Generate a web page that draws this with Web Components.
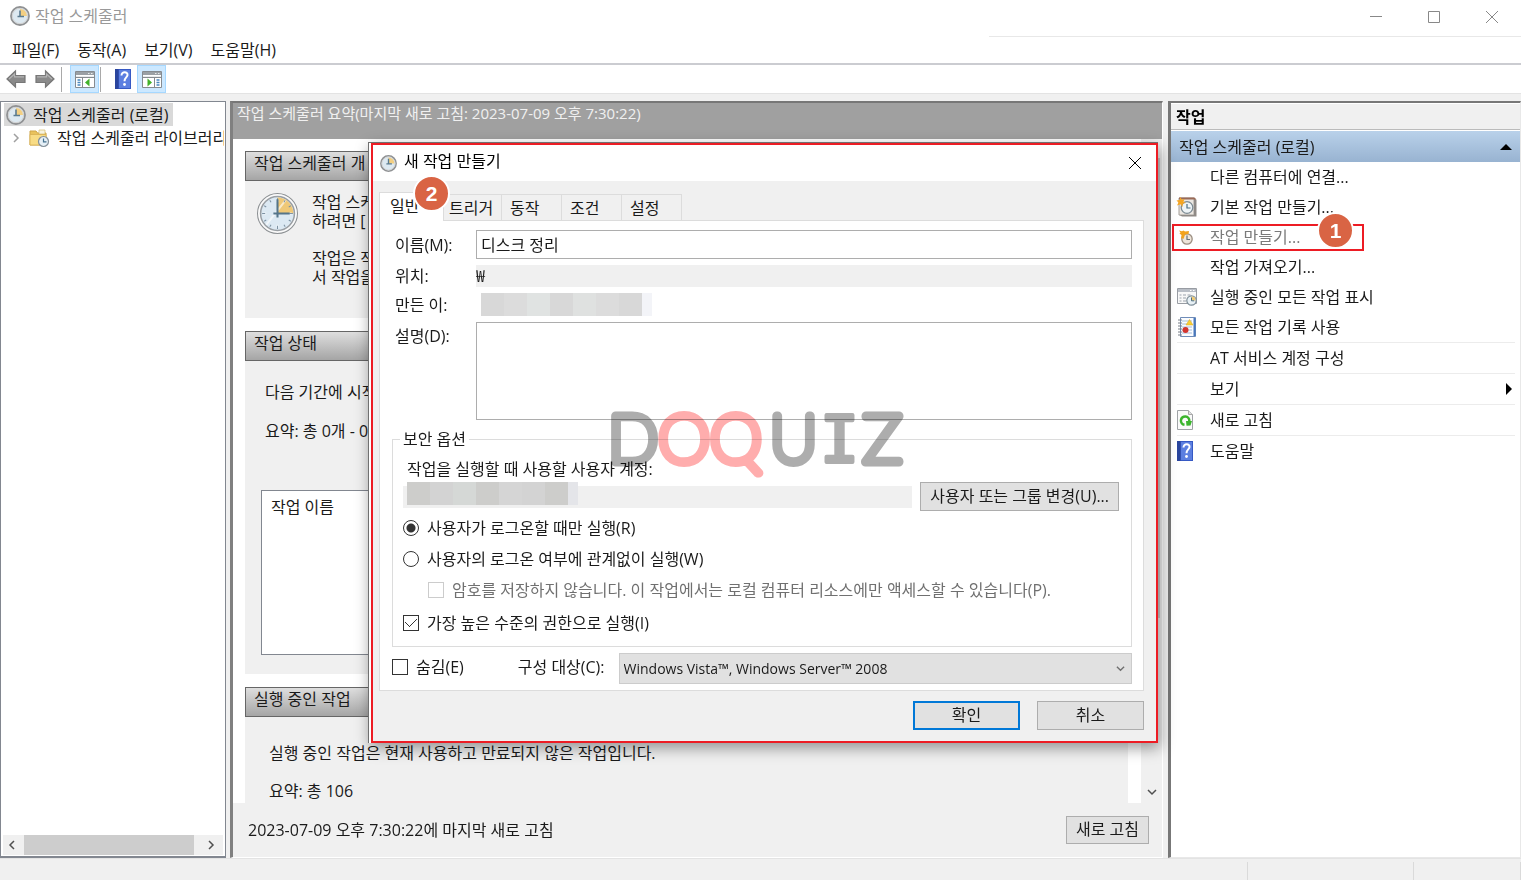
<!DOCTYPE html>
<html lang="ko">
<head>
<meta charset="utf-8">
<title>작업 스케줄러</title>
<style>
	html, body {
		margin: 0;
		height: 100%;
	}
	body {
		font: 16px/22px "Open Sans", "Noto Sans CJK KR", sans-serif;
		color: #1a1a1a;
		background: #f0f0f0;
	}
</style>
</head>
<body>
<scheduler-app></scheduler-app>
<script>
const icons = {
	clock: `<svg viewBox="0 0 40 40"><circle cx="20" cy="20" r="19.500" fill="#fafafa" stroke="#8b8f92"/><circle cx="20" cy="20" r="16.500" fill="#dce9f3" stroke="#9a9fa4" stroke-width="1.500"/><path d="M20 20V4.500A15.500 15.500 0 0 1 35.500 20z" fill="#efc877"/><path d="M9 31L28 7M20 6v3M20 31v3M6 20h3M31 20h3" stroke="#fff" stroke-width="2" opacity=".6"/><path d="M20 5v3M20 32v3M5 20h3M32 20h3M12.500 7l1.200 2M7 12.500l2 1.200M7 27.500l2-1.200M12.500 33l1.200-2M27.500 33l-1.200-2M33 27.500l-2-1.200M27.500 7l-1.200 2M33 12.500l-2 1.200" stroke="#7e93a4"/><path d="M20 6v18M16 20h16" stroke="#55758a" stroke-width="2" fill="none"/></svg>`,
	clockSmall: `<svg viewBox="0 0 20 20"><circle cx="10" cy="10" r="9" fill="#dde9f1" stroke="#8f9193" stroke-width="1.800"/><circle cx="10" cy="10" r="7.700" fill="none" stroke="#d2d2d2"/><path d="M10 10V3a7 7 0 0 1 7 7z" fill="#f3cf82"/><path d="M10 4.500v6.500M7.500 10.500H14" stroke="#5a7b90" stroke-width="1.600" fill="none"/></svg>`,
	back: `<svg viewBox="0 0 20 18"><path d="M1 9l8.500-8v4.500H19v7H9.500V17z" fill="#8a8a8a" stroke="#777" stroke-width="1.200"/><path d="M3 9l5.500-5v2.800H18" stroke="#b4b4b4" stroke-width="1.200" fill="none"/></svg>`,
	forward: `<svg viewBox="0 0 20 18"><path d="M19 9l-8.500-8v4.500H1v7h9.500V17z" fill="#8a8a8a" stroke="#777" stroke-width="1.200"/><path d="M17 9l-5.500-5v2.800H2" stroke="#b4b4b4" stroke-width="1.200" fill="none"/></svg>`,
	paneLeft: `<svg viewBox="0 0 20 18"><path d="M.5 1.500h19v16H.5z" fill="#fff" stroke="#868b90"/><path d="M1 2h18v3H1z" fill="#9aa0a5"/><path d="M13 3.500h1.500M16 3.500h1.500M1 6.500h18" stroke="#e8ebed"/><path d="M1 7.500h18M7.500 8v9" stroke="#868b90"/><path d="M2.500 10h3M2.500 12.500h3M2.500 15h3" stroke="#4787bf" stroke-width="1.300"/><path d="M14.500 8.500v8L10 12.500z" fill="#42b229"/></svg>`,
	paneRight: `<svg viewBox="0 0 20 18"><path d="M.5 1.500h19v16H.5z" fill="#fff" stroke="#868b90"/><path d="M1 2h18v3H1z" fill="#9aa0a5"/><path d="M13 3.500h1.500M16 3.500h1.500M1 6.500h18" stroke="#e8ebed"/><path d="M1 7.500h18M12.500 8v9" stroke="#868b90"/><path d="M14.500 10h3M14.500 12.500h3M14.500 15h3" stroke="#4787bf" stroke-width="1.300"/><path d="M5.500 8.500v8l4.500-4z" fill="#42b229"/></svg>`,
	help: `<svg viewBox="0 0 16 20"><path d="M0 0h16v20H0z" fill="#3659c4"/><path d="M4 1h11v18H4z" fill="#5c7fe0"/><path d="M0 0h3.500v20H0z" fill="#2a459d"/><path d="M6.500 6.500c0-4.500 6.500-4 6-.3-.3 2.300-3 2.400-3 6" fill="none" stroke="#fff" stroke-width="2"/><circle cx="9.500" cy="15.500" r="1.400" fill="#fff"/></svg>`,
	folder: `<svg viewBox="0 0 20 18"><path d="M1 2h6l1.500 2H17v12H1z" fill="#e9c25c" stroke="#cfa548"/><path d="M10 1h6v4h-6z" fill="#f7f3df" stroke="#d6bb6d" stroke-width=".7"/><path d="M1 5.500h16V16H1z" fill="#f8dc85" stroke="#d8b052" stroke-width=".8"/><circle cx="14.500" cy="12.500" r="5" fill="#e5eff6" stroke="#84909a" stroke-width="1.200"/><path d="M14.500 9.500v3.300h3" stroke="#45728f" stroke-width="1.200" fill="none"/></svg>`,
	basic: `<svg viewBox="0 0 20 20"><path d="M2 1h15v17H2z" fill="#ebe7e2" stroke="#a49e98"/><path d="M17 1l2.500 2v16.500H5L2.500 18H17z" fill="#8f8a86"/><path d="M2 .5h15.500l2 2H2z" fill="#9a6a57"/><circle cx="10" cy="10.500" r="5.800" fill="#eef4f7" stroke="#7c8b94" stroke-width="1.300"/><path d="M10 7v4h3.500" stroke="#4c7086" stroke-width="1.200" fill="none"/><path d="M3.500 0l1.200 2.800L7.500 2l-1 2.700L9 6 5.800 6.500 5.500 10l-2-2.800L0 8.500l1.500-3L-.5 3.500l3-.4z" fill="#f5a623"/></svg>`,
	create: `<svg viewBox="0 0 20 20"><circle cx="10" cy="12" r="5.200" fill="#eee5da" stroke="#9a8d80" stroke-width="1.300"/><path d="M10 8.500V12.500h3" stroke="#67727c" stroke-width="1.200" fill="none"/><path d="M2 3.500l3 .8 1.500-.8 1.500 1 4-.5-.5 3-3.500.5L6.500 12l-1.500-1-1 1 .5-4-2-1.500 1-1z" fill="#f2a21d"/></svg>`,
	running: `<svg viewBox="0 0 20 18"><path d="M.5.5h19v15H.5z" fill="#f8f8f8" stroke="#989ca3"/><path d="M1 1h18v3H1z" fill="#b9bec6"/><path d="M13 2.500h1.500M16 2.500h1.500" stroke="#fff"/><path d="M2.500 7h2M6 7h3M10.500 7h3M2.500 10h2M6 10h3M2.500 13h2M6 13h3" stroke="#9ca3ac"/><circle cx="14.500" cy="12.500" r="4.700" fill="#e7f0f5" stroke="#7e8e98" stroke-width="1.200"/><path d="M14.500 12.500V8.500a4 4 0 0 1 4 4z" fill="#f1ca75"/><path d="M14.500 9.500v3.300h2.700" stroke="#4b6e83" fill="none"/></svg>`,
	history: `<svg viewBox="0 0 20 20"><path d="M3.500.5h15v19h-15z" fill="#fafcff" stroke="#6f8cb8"/><path d="M16.500 1h2v18h-2z" fill="#4978bd"/><path d="M5 4h10M5 7h10M5 10h10M5 13h10M5 16h10" stroke="#a6bdd9"/><path d="M1 3h4M1 6h4M1 9h4M1 12h4M1 15h4M1 18h4" stroke="#777d85"/><path d="M12.500 2.500l3.500 5.500H9z" fill="#f8cf35" stroke="#d8a722" stroke-width=".5"/><circle cx="8.500" cy="13" r="3" fill="#d3342e"/></svg>`,
	refresh: `<svg viewBox="0 0 16 20"><path d="M.5.5h11l4 4v15H.5z" fill="#fafafa" stroke="#9fa3a6"/><path d="M11.500.5v4h4" fill="#e0e0e0" stroke="#aaa"/><path d="M7.500 14.800A4.200 4.200 0 1 1 12.300 11" fill="none" stroke="#3cb52e" stroke-width="2.500"/><path d="M9 11h6l-1.500 4.500-4 .2z" fill="#3cb52e"/></svg>`,
	close: `<svg viewBox="0 0 12 12"><path d="M0 0l12 12M12 0L0 12" stroke="currentColor"/></svg>`,
	minimize: `<svg viewBox="0 0 12 12"><path d="M0 5.500h12" stroke="currentColor"/></svg>`,
	maximize: `<svg viewBox="0 0 12 12"><path d="M.5.5h11v11H.5z" fill="none" stroke="currentColor"/></svg>`,
	chevron: `<svg viewBox="0 0 10 10"><path d="M1 3l4 4 4-4" fill="none" stroke="currentColor" stroke-width="1.500"/></svg>`,
	triangle: `<svg viewBox="0 0 12 12"><path d="M0 9l6-6 6 6z" fill="#000"/></svg>`
};

class UiIcon extends HTMLElement {
	constructor() {
		super();
		this.attachShadow({mode: 'open'});
	}
	connectedCallback() {
		const width = this.getAttribute('width') || 20;
		const height = this.getAttribute('height') || width;
		this.shadowRoot.innerHTML = `
		<style>
		:host {
			display: block;
			flex: none;
			width: ${width}px;
			height: ${height}px;
		}
		svg {
			display: block;
			width: 100%;
			height: 100%;
			overflow: visible;
		}
		</style>
		${icons[this.getAttribute('name')]}`;
	}
}
window.customElements.define('ui-icon', UiIcon);

class StepBadge extends HTMLElement {
	constructor() {
		super();
		this.attachShadow({mode: 'open'}).innerHTML = `
		<style>
		:host {
			display: flex;
			align-items: center;
			justify-content: center;
			width: 33px;
			height: 33px;
			border: 2px solid #fff;
			border-radius: 50%;
			background: #d96444;
			color: #fff;
			font: bold 21px/24px "Liberation Sans", sans-serif;
		}
		</style>
		<slot></slot>`;
	}
}
window.customElements.define('step-badge', StepBadge);

class TitleBar extends HTMLElement {
	constructor() {
		super();
		this.attachShadow({mode: 'open'}).innerHTML = `
		<style>
		:host {
			display: flex;
			justify-content: space-between;
			height: 37px;
			background: #fff;
			color: #999;
		}
		.title {
			display: flex;
			align-items: center;
			gap: 5px;
			height: 32px;
			padding-left: 10px;
		}
		.controls {
			display: flex;
			width: 35%;
			justify-content: flex-end;
			border-bottom: 1px solid #e8e8e8;
		}
		button {
			display: flex;
			align-items: center;
			justify-content: center;
			width: 58px;
			height: 34px;
			padding: 0;
			border: 0;
			background: none;
			color: #888;
		}
		</style>
		<div class="title"><ui-icon name="clockSmall"></ui-icon><span>작업 스케줄러</span></div>
		<div class="controls">
			<button aria-label="최소화"><ui-icon name="minimize" width="12"></ui-icon></button>
			<button aria-label="최대화"><ui-icon name="maximize" width="12"></ui-icon></button>
			<button aria-label="닫기"><ui-icon name="close" width="12"></ui-icon></button>
		</div>`;
	}
}
window.customElements.define('title-bar', TitleBar);

class MenuBar extends HTMLElement {
	constructor() {
		super();
		this.attachShadow({mode: 'open'}).innerHTML = `
		<style>
		:host {
			display: flex;
			gap: 18px;
			height: 26px;
			padding-left: 12px;
			background: #fff;
			border-bottom: 2px solid #cbccd1;
		}
		button {
			padding: 0;
			border: 0;
			background: none;
			color: inherit;
			font: inherit;
		}
		</style>
		<button>파일(F)</button>
		<button>동작(A)</button>
		<button>보기(V)</button>
		<button>도움말(H)</button>`;
	}
}
window.customElements.define('menu-bar', MenuBar);

class ToolBar extends HTMLElement {
	constructor() {
		super();
		this.attachShadow({mode: 'open'}).innerHTML = `
		<style>
		:host {
			display: flex;
			align-items: center;
			height: 28px;
			padding-left: 1px;
			background: #fff;
			border-bottom: 1px solid #e3e3e3;
		}
		button {
			display: flex;
			align-items: center;
			justify-content: center;
			width: 29px;
			height: 28px;
			box-sizing: border-box;
			padding: 0;
			border: 0;
			background: none;
		}
		button.on {
			background: #cce8ff;
			border: 1px solid #a6d8ff;
		}
		i {
			width: 1px;
			height: 25px;
			background: #a9a9a9;
		}
		i.first {
			margin: 0 8px 0 2px;
		}
		i.second {
			margin: 0 7px 0 1px;
		}
		</style>
		<button aria-label="뒤로"><ui-icon name="back" height="18"></ui-icon></button>
		<button aria-label="앞으로"><ui-icon name="forward" height="18"></ui-icon></button>
		<i class="first"></i>
		<button class="on" aria-label="콘솔 트리"><ui-icon name="paneLeft" height="18"></ui-icon></button>
		<i class="second"></i>
		<button aria-label="도움말"><ui-icon name="help" width="16" height="20"></ui-icon></button>
		<button class="on" aria-label="작업 창"><ui-icon name="paneRight" height="18"></ui-icon></button>`;
	}
}
window.customElements.define('tool-bar', ToolBar);

class TreePane extends HTMLElement {
	constructor() {
		super();
		this.attachShadow({mode: 'open'}).innerHTML = `
		<style>
		:host {
			display: flex;
			flex-direction: column;
			width: 226px;
			box-sizing: border-box;
			border: 1px solid #828790;
			border-bottom-width: 2px;
			background: #fff;
			white-space: nowrap;
		}
		.tree {
			flex: 1;
			overflow: hidden;
			padding: 1px 0 0 3px;
			margin-right: 1px;
		}
		.node {
			display: flex;
			align-items: center;
			gap: 7px;
			height: 23px;
		}
		.root {
			width: max-content;
			padding: 0 4px 0 2px;
			background: #d9d9d9;
		}
		.child {
			gap: 8px;
			padding-left: 7px;
		}
		.child .arrow {
			color: #a0a0a0;
			transform: rotate(-90deg);
		}
		.scroll {
			display: flex;
			align-items: center;
			justify-content: space-between;
			height: 20px;
			margin: 0 2px 1px;
			padding: 0 7px 0 4px;
			background: #f0f0f0;
			color: #505050;
		}
		.thumb {
			flex: 1;
			height: 20px;
			margin: 0 12px 0 7px;
			background: #cdcdcd;
		}
		.left {
			transform: rotate(90deg);
		}
		.right {
			transform: rotate(-90deg);
		}
		</style>
		<div class="tree">
			<div class="node root"><ui-icon name="clockSmall"></ui-icon><span>작업 스케줄러 (로컬)</span></div>
			<div class="node child"><ui-icon class="arrow" name="chevron" width="10"></ui-icon><ui-icon name="folder" height="18"></ui-icon><span>작업 스케줄러 라이브러리</span></div>
		</div>
		<div class="scroll">
			<ui-icon class="left" name="chevron" width="10"></ui-icon>
			<div class="thumb"></div>
			<ui-icon class="right" name="chevron" width="10"></ui-icon>
		</div>`;
	}
}
window.customElements.define('tree-pane', TreePane);

class SummaryGroup extends HTMLElement {
	constructor() {
		super();
		this.attachShadow({mode: 'open'}).innerHTML = `
		<style>
		:host {
			display: block;
			background: #f0f0f0;
		}
		header {
			height: 30px;
			box-sizing: border-box;
			padding: 0 8px;
			border: 1px solid #666;
			background: linear-gradient(#dedede, #a5a5a5);
		}
		</style>
		<header><slot name="heading"></slot></header>
		<slot></slot>`;
	}
}
window.customElements.define('summary-group', SummaryGroup);

class SummaryPane extends HTMLElement {
	constructor() {
		super();
		this.attachShadow({mode: 'open'}).innerHTML = `
		<style>
		:host {
			display: flex;
			flex-direction: column;
			min-width: 0;
			min-height: 0;
			margin-right: 1px;
			box-sizing: border-box;
			border: 1px solid #fff;
			border-width: 2px 1px 1px 3px;
			border-color: #777 #fff #fff #808080;
		}
		.caption {
			height: 36px;
			box-sizing: border-box;
			padding-left: 4px;
			background: #a0a0a0;
			color: #f0f0f0;
			font-size: 15px;
			line-height: 20px;
		}
		.view {
			display: flex;
			flex: 1;
			min-height: 0;
		}
		.groups {
			display: flex;
			flex-direction: column;
			flex: 1;
			gap: 13px;
			overflow: hidden;
			padding: 12px 13px 0 12px;
			background: #fff;
		}
		summary-group {
			flex: none;
		}
		summary-group:last-child {
			flex: 1 0 auto;
		}
		p {
			margin: 0;
		}
		.overview {
			display: flex;
			gap: 14px;
			padding: 12px 12px 31px;
			line-height: 19px;
		}
		.overview p + p {
			margin-top: 18px;
		}
		.status {
			padding: 20px 16px 19px 20px;
		}
		.status p + p {
			margin-top: 17px;
		}
		.list {
			height: 163px;
			margin: 48px 0 0 -4px;
			border: 1px solid #828790;
			background: #fff;
		}
		th {
			padding: 3px 7px;
			font-weight: normal;
		}
		.active {
			padding: 25px 24px 0;
		}
		.active p + p {
			margin-top: 16px;
		}
		.scroll {
			display: flex;
			flex-direction: column;
			justify-content: space-between;
			align-items: center;
			width: 21px;
			padding-bottom: 6px;
			color: #505050;
		}
		.thumb {
			width: 17px;
			height: 460px;
			margin-top: 19px;
			background: #cdcdcd;
		}
		footer {
			display: flex;
			align-items: center;
			justify-content: space-between;
			height: 54px;
			padding: 0 13px 0 15px;
		}
		footer button {
			height: 28px;
			padding: 0 9px 2px;
			border: 1px solid #adadad;
			background: #e1e1e1;
			color: inherit;
			font: inherit;
		}
		</style>
		<div class="caption">작업 스케줄러 요약(마지막 새로 고침: 2023-07-09 오후 7:30:22)</div>
		<div class="view">
			<div class="groups">
				<summary-group>
					<span slot="heading">작업 스케줄러 개</span>
					<div class="overview">
						<ui-icon name="clock" width="41"></ui-icon>
						<div>
							<p>작업 스케<br>하려면 [</p>
							<p>작업은 작<br>서 작업을</p>
						</div>
					</div>
				</summary-group>
				<summary-group>
					<span slot="heading">작업 상태</span>
					<div class="status">
						<p>다음 기간에 시작</p>
						<p>요약: 총 0개 - 0</p>
						<div class="list"><table><tr><th>작업 이름</th></tr></table></div>
					</div>
				</summary-group>
				<summary-group>
					<span slot="heading">실행 중인 작업</span>
					<div class="active">
						<p>실행 중인 작업은 현재 사용하고 만료되지 않은 작업입니다.</p>
						<p>요약: 총 106</p>
					</div>
				</summary-group>
			</div>
			<div class="scroll"><div class="thumb"></div><ui-icon name="chevron" width="10"></ui-icon></div>
		</div>
		<footer><span>2023-07-09 오후 7:30:22에 마지막 새로 고침</span><button>새로 고침</button></footer>`;
	}
}
window.customElements.define('summary-pane', SummaryPane);

class ActionItem extends HTMLElement {
	constructor() {
		super();
		this.attachShadow({mode: 'open'});
	}
	connectedCallback() {
		const icon = this.getAttribute('icon');
		const narrow = icon == 'help' || icon == 'refresh';
		this.shadowRoot.innerHTML = `
		<style>
		:host {
			display: block;
			position: relative;
			margin: 0 5px 0 6px;
		}
		:host([divided]) {
			border-top: 1px solid #ececec;
		}
		button {
			display: flex;
			align-items: center;
			width: 100%;
			height: 30px;
			padding: 0;
			border: 0;
			background: none;
			color: inherit;
			font: inherit;
			text-align: left;
		}
		:host([disabled]) button {
			color: #7a7a7a;
		}
		.icon {
			width: 33px;
		}
		.label {
			flex: 1;
		}
		.more {
			transform: rotate(90deg);
		}
		</style>
		<button ${this.hasAttribute('disabled') ? 'disabled' : ''}>
			<span class="icon">${icon ? `<ui-icon name="${icon}" width="${narrow ? 16 : 20}" height="20"></ui-icon>` : ''}</span>
			<span class="label"><slot></slot></span>
			${this.hasAttribute('submenu') ? '<ui-icon class="more" name="triangle" width="12"></ui-icon>' : ''}
		</button>
		<slot name="mark"></slot>`;
	}
}
window.customElements.define('action-item', ActionItem);

class ActionPane extends HTMLElement {
	constructor() {
		super();
		this.attachShadow({mode: 'open'}).innerHTML = `
		<style>
		:host {
			display: block;
			box-sizing: border-box;
			border: 1px solid #e8e8e8;
			border-width: 2px 1px 1px 3px;
			border-top-color: #777;
			border-left-color: #777;
			background: #fff;
		}
		h2 {
			margin: 0;
			padding: 2px 5px 1px;
			border-top: 1px solid #fff;
			border-bottom: 1px solid #bbb;
			background: #f0f0f0;
			font-size: 16px;
			line-height: 22px;
			color: #000;
		}
		.group {
			display: flex;
			align-items: center;
			justify-content: space-between;
			height: 31px;
			margin-top: 1px;
			padding: 0 8px;
			background: linear-gradient(#b9d1ea, #98b3d1);
		}
		.frame {
			position: absolute;
			inset: 2px auto auto -5px;
			width: 188px;
			height: 23px;
			border: 2px solid #ed1c24;
		}
		step-badge {
			position: absolute;
			right: 8px;
			top: -14px;
		}
		</style>
		<h2>작업</h2>
		<div class="group"><span>작업 스케줄러 (로컬)</span><ui-icon name="triangle" width="12"></ui-icon></div>
		<action-item>다른 컴퓨터에 연결...</action-item>
		<action-item icon="basic">기본 작업 만들기...</action-item>
		<action-item icon="create" disabled>작업 만들기...<div class="frame" slot="mark"><step-badge>1</step-badge></div></action-item>
		<action-item>작업 가져오기...</action-item>
		<action-item icon="running">실행 중인 모든 작업 표시</action-item>
		<action-item icon="history">모든 작업 기록 사용</action-item>
		<action-item divided>AT 서비스 계정 구성</action-item>
		<action-item divided submenu>보기</action-item>
		<action-item divided icon="refresh">새로 고침</action-item>
		<action-item divided icon="help">도움말</action-item>`;
	}
}
window.customElements.define('action-pane', ActionPane);

// account name covered with grey blocks
class MaskedName extends HTMLElement {
	constructor() {
		super();
		this.attachShadow({mode: 'open'}).innerHTML = `
		<style>
		:host {
			display: flex;
			width: 171px;
			height: 23px;
		}
		i {
			flex: 23;
			background: var(--mask, #dcdcdc);
		}
		i:nth-of-type(1), i:nth-of-type(4), i:nth-of-type(7) {
			background: var(--mask-dark, #d8d8d8);
		}
		i:nth-of-type(3) {
			background: var(--mask-green, #e0e3e2);
		}
		i:nth-of-type(5) {
			background: var(--mask-light, #dfe1e0);
		}
		i:nth-of-type(8) {
			flex: 10;
			background: var(--mask-end, #f3f4f8);
		}
		</style>
		<i></i><i></i><i></i><i></i><i></i><i></i><i></i><i></i>`;
	}
}
window.customElements.define('masked-name', MaskedName);

class TaskDialog extends HTMLElement {
	constructor() {
		super();
		this.attachShadow({mode: 'open'}).innerHTML = `
		<style>
		:host {
			display: block;
			border: 1px solid #707070;
			border-width: 1px 0 0 1px;
			padding-left: 2px;
			background: #fff;
			box-shadow: 2px 5px 14px rgba(0, 0, 0, .4);
		}
		.frame {
			border: 2px solid #ed1c24;
			background: #f0f0f0;
		}
		.title {
			display: flex;
			align-items: center;
			gap: 7px;
			height: 36px;
			padding: 0 15px 0 7px;
			background: #fff;
			color: #000;
		}
		.title span {
			flex: 1;
			padding-bottom: 4px;
		}
		button {
			height: 29px;
			padding: 0 9px 2px;
			border: 1px solid #adadad;
			background: #e1e1e1;
			color: inherit;
			font: inherit;
			white-space: nowrap;
		}
		.title button {
			height: auto;
			padding: 0;
			border: 0;
			background: none;
		}
		.body {
			padding: 11px 12px 11px 6px;
		}
		.tabs {
			display: flex;
			align-items: flex-end;
			position: relative;
		}
		.tabs button {
			width: 60px;
			height: 26px;
			padding: 0 8px;
			border: 1px solid #dcdcdc;
			border-width: 1px 1px 0 0;
			background: #f0f0f0;
			text-align: left;
		}
		.tabs .current {
			width: 65px;
			height: 29px;
			margin-bottom: -1px;
			padding: 0 10px 3px;
			border-left-width: 1px;
			background: #fff;
			z-index: 1;
		}
		.tabs .current + button {
			width: 58px;
			padding: 0 5px;
		}
		step-badge {
			position: absolute;
			left: 34px;
			top: -17px;
			z-index: 2;
		}
		.panel {
			padding: 9px 11px 6px 12px;
			border: 1px solid #dcdcdc;
			background: #fff;
		}
		.fields {
			display: grid;
			grid-template-columns: 81px 1fr;
			gap: 6px 0;
			align-items: center;
			margin-left: 3px;
		}
		input[type=text], textarea, select {
			box-sizing: border-box;
			width: 100%;
			margin: 0;
			padding: 0 4px 2px;
			border: 1px solid #adadad;
			border-radius: 0;
			background: #fff;
			color: inherit;
			font: inherit;
		}
		#name {
			height: 29px;
		}
		input[readonly] {
			height: 22px;
			padding: 0;
			border: 0;
			background: #f0f0f0;
		}
		textarea {
			display: block;
			height: 98px;
			resize: none;
		}
		.top {
			align-self: start;
			margin-top: 3px;
		}
		.fields masked-name {
			margin-left: 5px;
		}
		fieldset {
			min-width: 0;
			margin: 8px 0 0;
			padding: 0 12px 12px 10px;
			border: 1px solid #dcdcdc;
		}
		legend {
			margin-left: -3px;
			padding: 0 3px;
		}
		.account-label {
			display: block;
			margin: 8px 0 2px 4px;
		}
		.account {
			display: flex;
			align-items: center;
			gap: 8px;
			margin-bottom: 6px;
		}
		.account-name {
			position: relative;
			flex: 1;
		}
		.account-name input {
			display: block;
		}
		.account-name masked-name {
			--mask: #d3d3d3;
			--mask-dark: #cdcdcb;
			--mask-green: #d5d8d6;
			--mask-light: #d5d5d5;
			--mask-end: #e4e5e9;
			position: absolute;
			left: 4px;
			top: -4px;
		}
		.choice {
			display: flex;
			align-items: center;
			gap: 8px;
		}
		.choice + .choice {
			margin-top: 9px;
		}
		.choice.sub {
			margin-left: 25px;
			color: #707070;
		}
		.choice input {
			appearance: none;
			flex: none;
			width: 16px;
			height: 16px;
			box-sizing: border-box;
			margin: 0;
			border: 1px solid #333;
			background: #fff;
		}
		.choice input[type=radio] {
			border-radius: 50%;
		}
		.choice input[type=radio]:checked {
			background: radial-gradient(#333 0 4px, #fff 5px);
		}
		.choice input[type=checkbox]:checked {
			background:
				linear-gradient(45deg, transparent 46%, #333 46% 54%, transparent 54%) 1px 6px / 5px 5px no-repeat,
				linear-gradient(-45deg, transparent 46%, #333 46% 54%, transparent 54%) 5px 3px / 8px 8px no-repeat;
		}
		.choice input:disabled {
			border-color: #ccc;
		}
		.choice + .last {
			margin-top: 11px;
		}
		.target {
			display: flex;
			align-items: center;
			margin-top: 6px;
		}
		.target label {
			padding-bottom: 4px;
		}
		.target .for {
			margin: 0 14px 0 54px;
		}
		.drop {
			position: relative;
			flex: 1;
		}
		select {
			display: block;
			appearance: none;
			height: 31px;
			padding-bottom: 0;
			border-color: #ccc;
			background: #e1e1e1;
			font-size: 14px;
		}
		.drop ui-icon {
			position: absolute;
			right: 7px;
			top: 11px;
			color: #707070;
		}
		.actions {
			display: flex;
			justify-content: flex-end;
			gap: 17px;
			margin-top: 10px;
		}
		.actions button {
			width: 107px;
		}
		.actions .ok {
			border: 2px solid #0078d7;
		}
		</style>
		<div class="frame">
			<div class="title"><ui-icon name="clockSmall" width="17"></ui-icon><span>새 작업 만들기</span><button aria-label="닫기"><ui-icon name="close" width="12"></ui-icon></button></div>
			<div class="body">
				<div class="tabs">
					<button class="current">일반</button><button>트리거</button><button>동작</button><button>조건</button><button>설정</button>
					<step-badge>2</step-badge>
				</div>
				<div class="panel">
					<div class="fields">
						<label for="name">이름(M):</label><input type="text" id="name" value="디스크 정리">
						<label for="place">위치:</label><input type="text" id="place" value="₩" readonly>
						<span>만든 이:</span><masked-name></masked-name>
						<label class="top" for="about">설명(D):</label><textarea id="about"></textarea>
					</div>
					<fieldset>
						<legend>보안 옵션</legend>
						<label class="account-label" for="account">작업을 실행할 때 사용할 사용자 계정:</label>
						<div class="account">
							<div class="account-name"><input type="text" id="account" readonly><masked-name></masked-name></div>
							<button>사용자 또는 그룹 변경(U)...</button>
						</div>
						<label class="choice"><input type="radio" name="logon" checked>사용자가 로그온할 때만 실행(R)</label>
						<label class="choice"><input type="radio" name="logon">사용자의 로그온 여부에 관계없이 실행(W)</label>
						<label class="choice sub"><input type="checkbox" disabled>암호를 저장하지 않습니다. 이 작업에서는 로컬 컴퓨터 리소스에만 액세스할 수 있습니다(P).</label>
						<label class="choice last"><input type="checkbox" checked>가장 높은 수준의 권한으로 실행(I)</label>
					</fieldset>
					<div class="target">
						<label class="choice"><input type="checkbox">숨김(E)</label>
						<label class="for" for="target">구성 대상(C):</label>
						<div class="drop">
							<select id="target"><option>Windows Vista™, Windows Server™ 2008</option></select>
							<ui-icon name="chevron" width="9"></ui-icon>
						</div>
					</div>
				</div>
				<div class="actions"><button class="ok">확인</button><button>취소</button></div>
			</div>
		</div>`;
	}
}
window.customElements.define('task-dialog', TaskDialog);

class WaterMark extends HTMLElement {
	constructor() {
		super();
		this.attachShadow({mode: 'open'}).innerHTML = `
		<style>
		:host {
			display: block;
			mix-blend-mode: multiply;
			pointer-events: none;
		}
		svg {
			display: block;
			overflow: visible;
		}
		text {
			font: 100 66px Lato, sans-serif;
			fill: #adadad;
			stroke: #adadad;
			stroke-width: 9px;
			stroke-linejoin: round;
		}
		.red {
			fill: #ffadad;
			stroke: #ffadad;
		}
		.mono {
			font: 64px "DejaVu Sans Mono", monospace;
			stroke-width: 4px;
		}
		</style>
		<svg width="304" height="70"><text x="-1" y="51">D<tspan class="red">OQ</tspan><tspan dx="8">U</tspan><tspan class="mono" dx="3">I</tspan><tspan dx="4">Z</tspan></text></svg>`;
	}
}
window.customElements.define('water-mark', WaterMark);

class StatusBar extends HTMLElement {
	constructor() {
		super();
		this.attachShadow({mode: 'open'}).innerHTML = `
		<style>
		:host {
			display: flex;
			height: 22px;
			box-sizing: border-box;
			padding-top: 3px;
			border-top: 1px solid #e3e3e3;
		}
		i {
			border-right: 1px solid #dadada;
		}
		i:nth-of-type(1) { flex: 1; }
		i:nth-of-type(2) { width: 165px; }
		i:nth-of-type(3) { width: 106px; }
		</style>
		<i></i><i></i><i></i>`;
	}
}
window.customElements.define('status-bar', StatusBar);

class SchedulerApp extends HTMLElement {
	constructor() {
		super();
		this.attachShadow({mode: 'open'}).innerHTML = `
		<style>
		:host {
			display: flex;
			flex-direction: column;
			position: relative;
			height: 100%;
			min-height: 760px;
			min-width: 1100px;
			overflow: hidden;
			isolation: isolate;
		}
		title-bar, menu-bar, tool-bar, status-bar {
			flex: none;
		}
		main {
			display: grid;
			grid-template-columns: 226px 1fr 353px;
			grid-template-rows: minmax(0, 1fr);
			flex: 1;
			min-height: 0;
			gap: 4px;
			padding-top: 7px;
		}
		task-dialog {
			position: absolute;
			left: 368px;
			right: 363px;
			top: 142px;
		}
		water-mark {
			position: absolute;
			left: 609px;
			top: 411px;
		}
		</style>
		<title-bar></title-bar>
		<menu-bar></menu-bar>
		<tool-bar></tool-bar>
		<main>
			<tree-pane></tree-pane>
			<summary-pane></summary-pane>
			<action-pane></action-pane>
		</main>
		<status-bar></status-bar>
		<task-dialog></task-dialog>
		<water-mark></water-mark>`;
	}
}
window.customElements.define('scheduler-app', SchedulerApp);
</script>
</body>
</html>
